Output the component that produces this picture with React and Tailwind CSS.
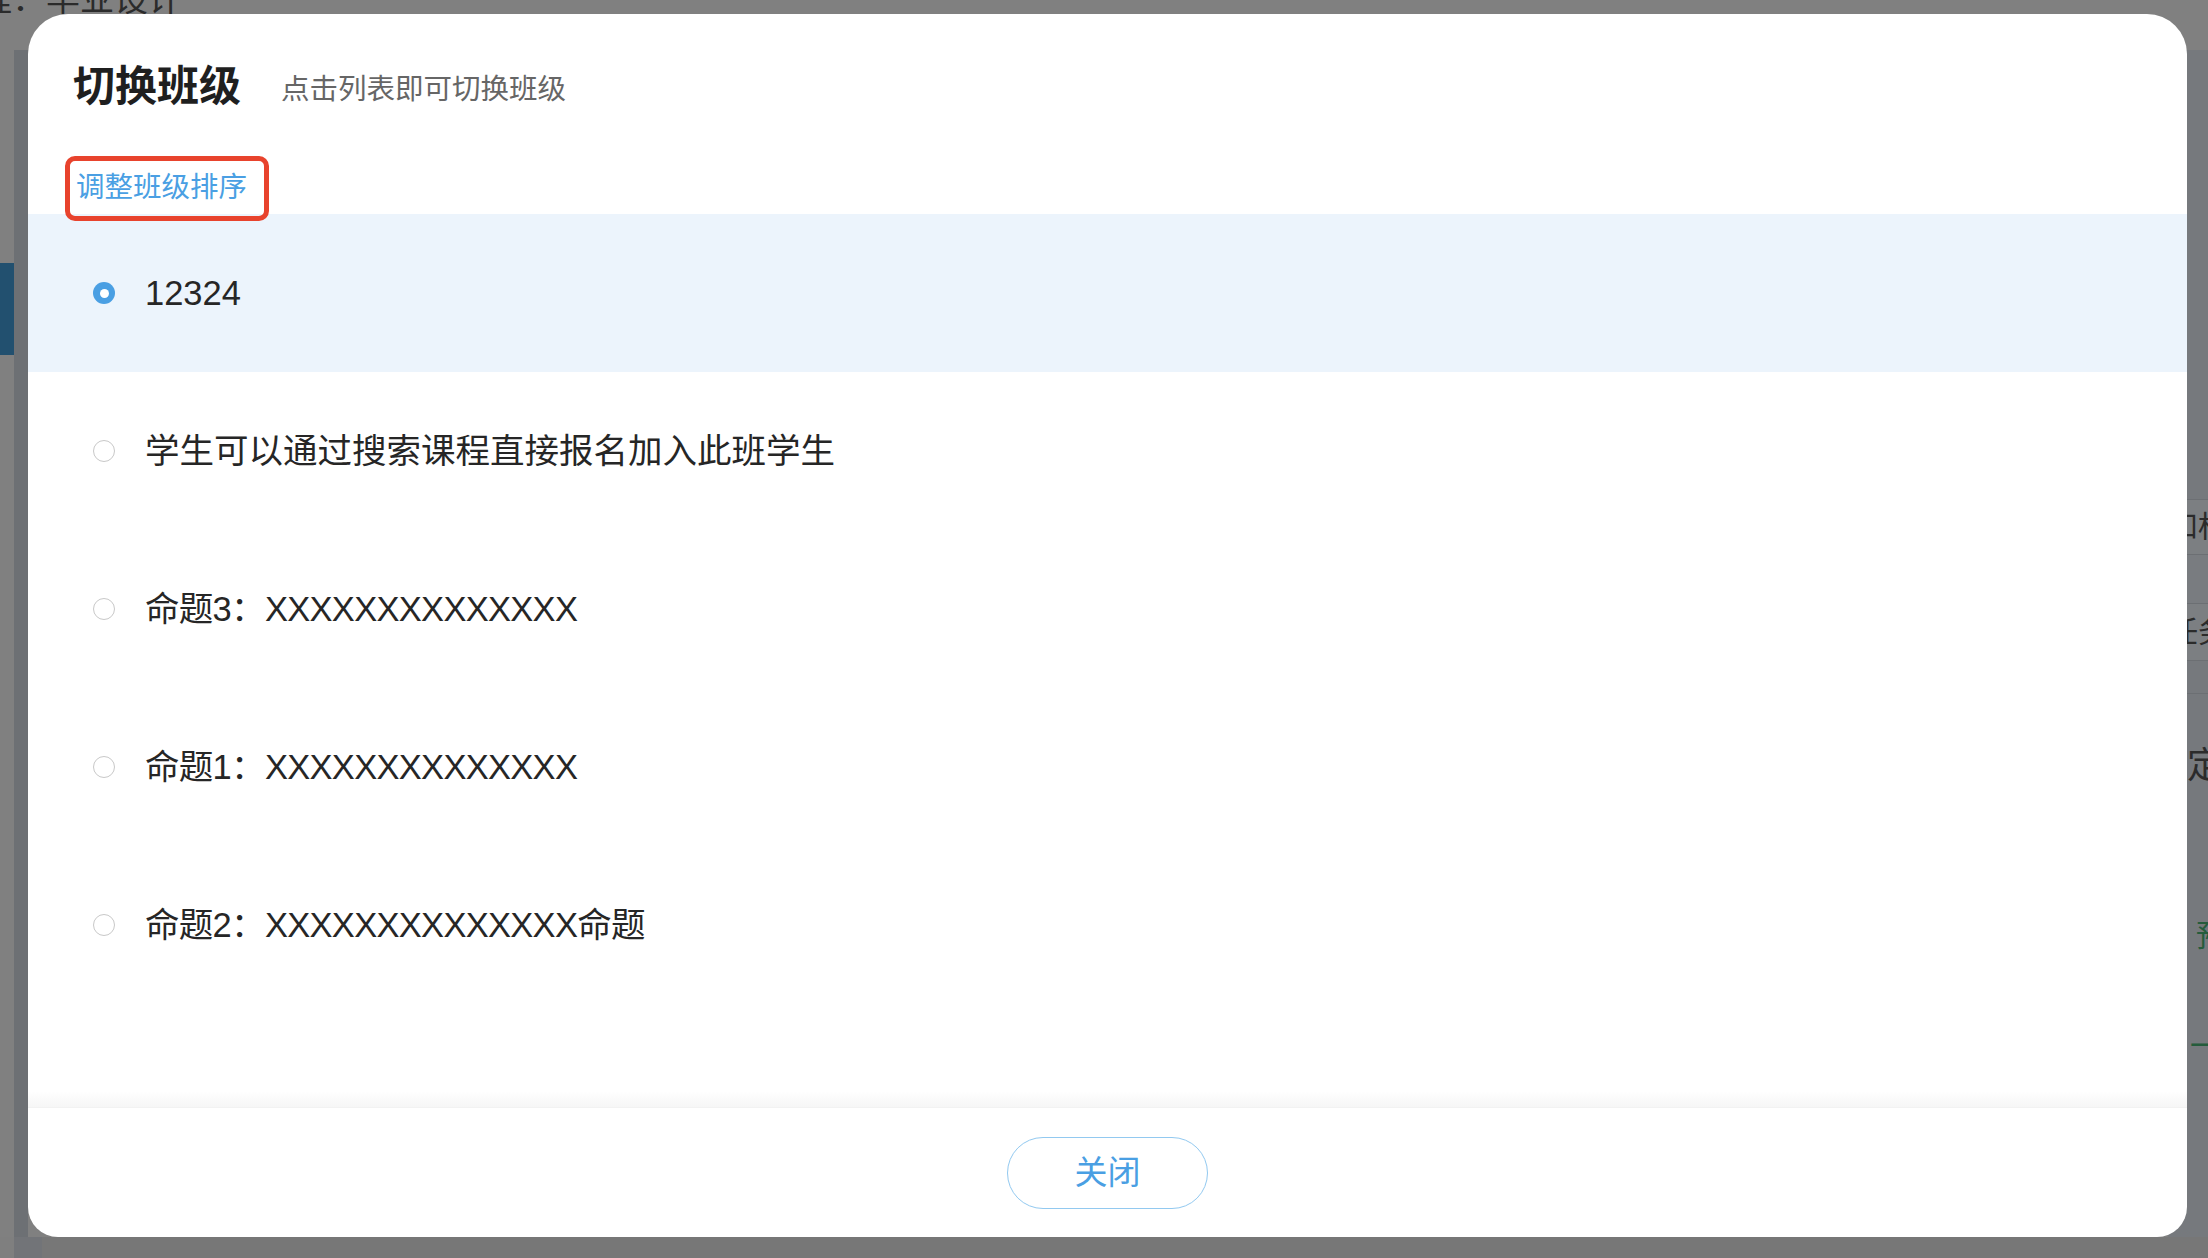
import { useState } from "react";

const classes = [
  { id: 1, name: "12324" },
  { id: 2, name: "学生可以通过搜索课程直接报名加入此班学生" },
  { id: 3, name: "命题3：XXXXXXXXXXXXXX", tight: true },
  { id: 4, name: "命题1：XXXXXXXXXXXXXX", tight: true },
  { id: 5, name: "命题2：XXXXXXXXXXXXXX命题", tight: true },
];

const font = "font-['Liberation_Sans',_'Noto_Sans_CJK_SC',_sans-serif]";

const Radio = ({ checked }) =>
  checked ? (
    <span className="flex h-[22px] w-[22px] shrink-0 items-center justify-center rounded-full bg-[#4a9fe3]">
      <span className="h-[9px] w-[9px] rounded-full bg-white" />
    </span>
  ) : (
    <span className="h-[22px] w-[22px] shrink-0 rounded-full border border-[#c8c8c8] bg-white" />
  );

// dimmed page behind the dialog
const Backdrop = () => (
  <div className="flex h-full w-full flex-col bg-[#808080]">
    <div className="relative h-[50px] shrink-0 overflow-hidden">
      <span className="absolute left-[-22px] top-[-18px] whitespace-nowrap text-[34px] leading-none text-[#2b2b2b]">
        程：毕业设计
      </span>
    </div>
    <div className="flex flex-1">
      <div className="flex w-[14px] flex-col">
        <div className="h-[213px]" />
        <div className="h-[92px] bg-[#22506f]" />
      </div>
      <div className="w-[14px] bg-[#6d7074]" />
      <div className="flex-1" />
      <div className="flex w-[40px] flex-col overflow-hidden whitespace-nowrap bg-[#76797d] text-[#2b2b2b]">
        <div className="h-[449px] shrink-0" />
        <div className="flex h-[55px] shrink-0 items-center border-t border-[#6c6f73] bg-[#7c7f82] text-[30px] leading-none">
          和标
        </div>
        <div className="h-[49px] shrink-0 border-t border-[#6c6f73] bg-[#797c80]" />
        <div className="flex h-[57px] shrink-0 items-center border-t border-[#6c6f73] bg-[#7c7f82] text-[30px] leading-none">
          任务
        </div>
        <div className="h-[33px] shrink-0 border-t border-[#6c6f73]" />
        <div className="flex h-[144px] shrink-0 items-center border-t border-[#6c6f73] text-[36px] leading-none">
          <span className="ml-[-17px]">规定</span>
        </div>
        <div className="flex h-[198px] shrink-0 items-center pl-[28px] text-[30px] leading-none text-[#255c3c]">
          预
        </div>
        <div className="flex h-[22px] shrink-0 items-center pl-[22px] text-[30px] leading-none text-[#255c3c]">
          一
        </div>
      </div>
    </div>
    <div className="flex h-[21px] shrink-0">
      <div className="w-[14px] bg-[#7f7f7f]" />
      <div className="w-[28px] bg-[#727478]" />
      <div className="flex-1 bg-[#777777]" />
    </div>
  </div>
);

export default function App() {
  const [current, setCurrent] = useState(1);

  return (
    <div className={`relative h-[1258px] w-[2208px] overflow-hidden ${font}`}>
      <Backdrop />

      <div className="absolute left-[28px] top-[14px] flex h-[1223px] w-[2159px] flex-col overflow-hidden rounded-t-[40px] rounded-b-[30px] bg-white">
        <header className="flex h-[146px] shrink-0 items-center gap-[40px] pl-[45px]">
          <h1 className="text-[42px] font-bold leading-none text-[#1f1f1f]">切换班级</h1>
          <span className="pt-[4px] text-[28.5px] leading-none text-[#666666]">点击列表即可切换班级</span>
        </header>

        <div className="relative flex h-[54px] shrink-0 items-center pl-[48px]">
          <a className="text-[28.5px] leading-none text-[#4a9fe3]">调整班级排序</a>
        </div>

        <ul className="flex-1">
          {classes.map((c) => (
            <li
              key={c.id}
              onClick={() => setCurrent(c.id)}
              className={`flex h-[158px] cursor-pointer items-center gap-[30px] pl-[65px] ${
                current === c.id ? "bg-[#ecf4fc]" : "bg-white"
              }`}
            >
              <Radio checked={current === c.id} />
              <span
                className={`text-[34.5px] leading-none text-[#262626] ${
                  c.tight ? "tracking-[-0.7px]" : ""
                }`}
              >
                {c.name}
              </span>
            </li>
          ))}
        </ul>

        <div className="h-[16px] shrink-0 bg-gradient-to-b from-white to-[#f6f6f6]" />
        <footer className="flex h-[130px] shrink-0 items-center justify-center border-t border-[#f2f2f2]">
          <button className="flex h-[72px] w-[201px] items-center justify-center rounded-full border-[1.5px] border-[#92c9f0] text-[33px] leading-none text-[#4a9fe3]">
            关闭
          </button>
        </footer>

        {/* red highlight drawn around the sort link */}
        <div className="pointer-events-none absolute left-[37px] top-[142px] h-[65px] w-[204px] rounded-[10px] border-[5px] border-[#e8432d]" />
      </div>
    </div>
  );
}
